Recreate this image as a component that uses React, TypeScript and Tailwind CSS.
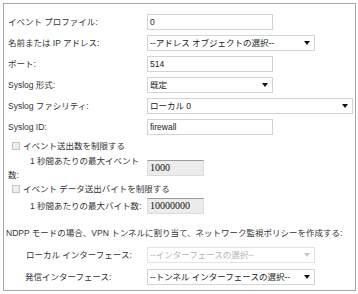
import React from 'react';

const Caret = ({ disabled }: { disabled?: boolean }) => (
  <span
    className={`ml-auto mr-[4px] w-0 h-0 border-l-[3px] border-r-[3px] border-t-[4px] border-l-transparent border-r-transparent ${
      disabled ? 'border-t-[#c8c8c8]' : 'border-t-[#111]'
    }`}
  />
);

const TextBox = ({ value, className }: { value: string; className: string }) => (
  <div className={`h-[16px] border border-[#d3d3d3] bg-white flex items-center pl-[2px] text-[#222] ${className}`}>
    {value}
  </div>
);

const NumBox = ({ value }: { value: string }) => (
  <div className="w-[57px] h-[16px] border border-[#dcdcdc] border-t-[#9a9a9a] bg-[#ececec] flex items-center pl-[2px] text-[10px] text-[#111] font-['Liberation_Serif',serif]">
    {value}
  </div>
);

const Select = ({ text, className, disabled }: { text: string; className: string; disabled?: boolean }) => (
  <div
    className={`h-[16px] border bg-white flex items-center pl-[2px] ${
      disabled ? 'border-[#e2e2e2] text-[#b5b5b5]' : 'border-[#d3d3d3] text-[#222]'
    } ${className}`}
  >
    <span>{text}</span>
    <Caret disabled={disabled} />
  </div>
);

const Row = ({ label, children, className = 'h-[21px]' }: { label: React.ReactNode; children?: React.ReactNode; className?: string }) => (
  <div className={`flex items-center ${className}`}>
    <div className="w-[139px] shrink-0">{label}</div>
    {children}
  </div>
);

const Check = ({ label }: { label: string }) => (
  <div className="flex items-center h-full">
    <span className="ml-[4px] w-[8px] h-[8px] border border-[#c4c4c4] bg-[#eeeeee]" />
    <span className="ml-[3px]">{label}</span>
  </div>
);

export default function App() {
  return (
    <div className="w-[358px] h-[294px] bg-white pt-[3px] pl-[3px] text-[8.5px] leading-[14px] text-[#333] font-['Liberation_Sans','Noto_Sans_CJK_JP',sans-serif]">
      <div className="w-[353px] h-[288px] border border-[#a8a8a8] pl-[4px] pt-[7px]">
        <Row label="イベント プロファイル:">
          <TextBox value="0" className="w-[126px]" />
        </Row>
        <Row label="名前または IP アドレス:">
          <Select text="--アドレス オブジェクトの選択--" className="w-[168px]" />
        </Row>
        <Row label="ポート:">
          <TextBox value="514" className="w-[126px]" />
        </Row>
        <Row label="Syslog 形式:">
          <Select text="既定" className="w-[126px]" />
        </Row>
        <Row label="Syslog ファシリティ:">
          <Select text="ローカル 0" className="w-[206px]" />
        </Row>
        <Row label="Syslog ID:">
          <TextBox value="firewall" className="w-[126px]" />
        </Row>

        <div className="h-[17px]">
          <Check label="イベント送出数を制限する" />
        </div>
        <Row
          className="h-[27px]"
          label={
            <div className="indent-[22px]">
              1 秒間あたりの最大イベント
              <br />
              数:
            </div>
          }
        >
          <NumBox value="1000" />
        </Row>
        <div className="h-[16px]">
          <Check label="イベント データ送出バイトを制限する" />
        </div>
        <Row className="h-[17px]" label={<div className="pl-[22px]">1 秒間あたりの最大バイト数:</div>}>
          <NumBox value="10000000" />
        </Row>

        <div className="mt-[10px] h-[18px] flex items-center -ml-[2px] whitespace-nowrap">
          NDPP モードの場合、VPN トンネルに割り当て、ネットワーク監視ポリシーを作成する:
        </div>
        <Row className="mt-[2px] h-[22px]" label={<div className="pl-[18px]">ローカル インターフェース:</div>}>
          <Select text="--インターフェースの選択--" className="w-[168px]" disabled />
        </Row>
        <Row className="h-[22px]" label={<div className="pl-[17px]">発信インターフェース:</div>}>
          <Select text="--トンネル インターフェースの選択--" className="w-[168px]" />
        </Row>
      </div>
    </div>
  );
}
